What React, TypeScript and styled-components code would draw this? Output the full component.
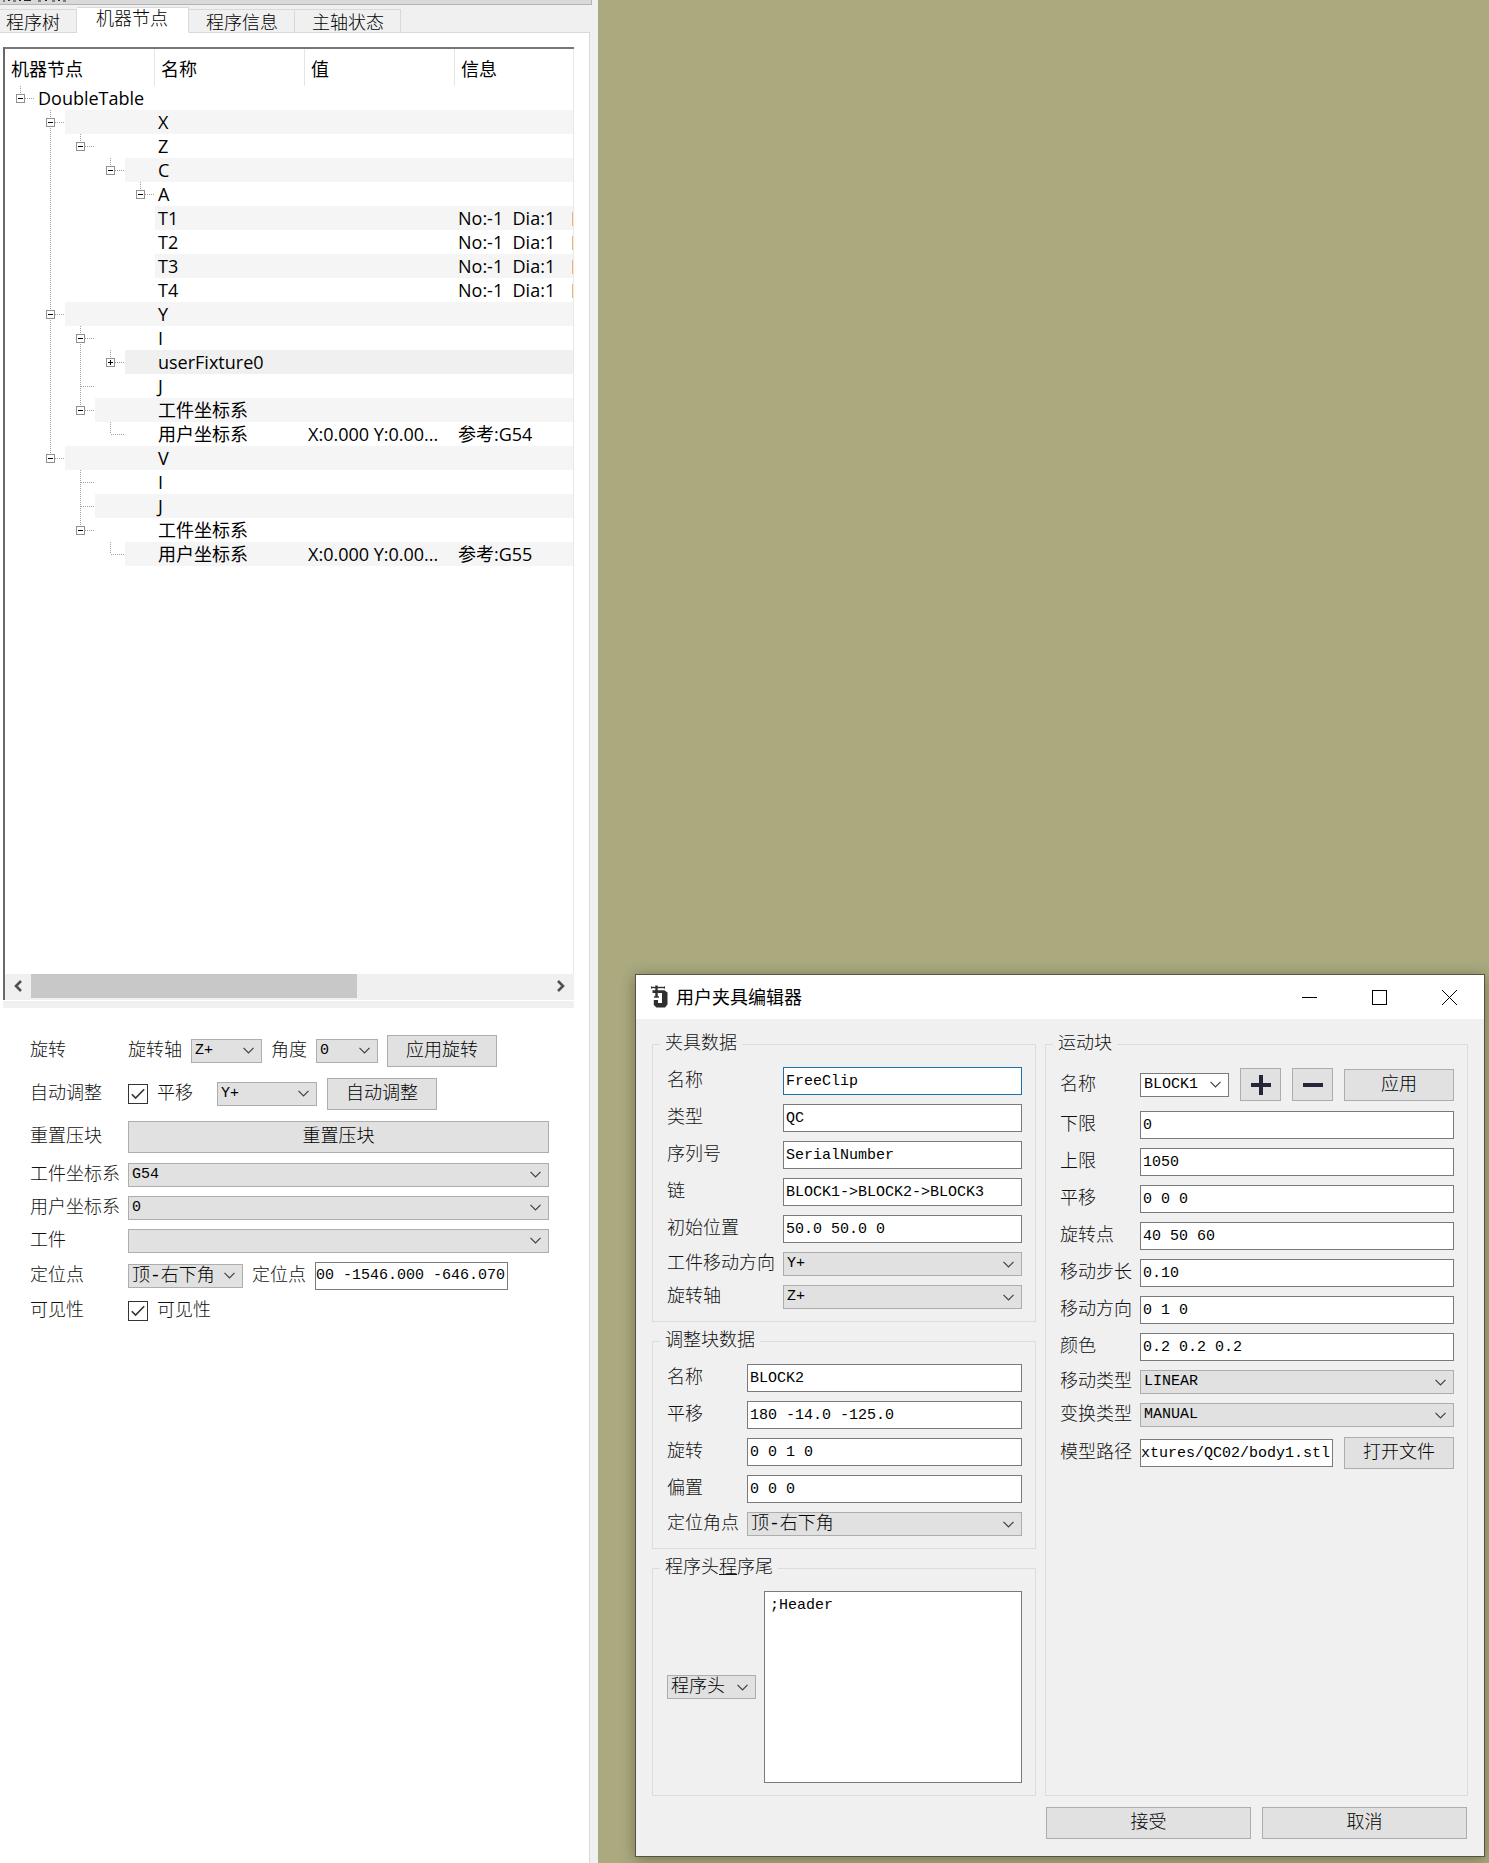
import React from 'react';
import styled, { createGlobalStyle, css } from 'styled-components';

const SANS = `"Open Sans", "Noto Sans CJK SC", sans-serif`;
const MONO = `"Liberation Mono", "Noto Sans CJK SC", monospace`;

const GlobalStyle = createGlobalStyle`
  *, *::before, *::after { box-sizing: border-box; }
  body { margin: 0; background: #aba97e; }
  button, input, select, textarea { margin: 0; border-radius: 0; color: #000; }
`;

/* ---------- shared controls ---------- */

const captionStyle = css`
  font: 300 18px/24px ${MONO};
  color: #111;
  white-space: nowrap;
`;

const Caption = styled.label`
  ${captionStyle}
`;

const CaptionText = styled.span`
  ${captionStyle}
`;

const PushButton = styled.button<{ $width?: string }>`
  flex-shrink: 0;
  height: 32px;
  width: ${(p) => p.$width ?? 'auto'};
  padding: 0;
  border: 1px solid #adadad;
  background: #e1e1e1;
  font: 300 18px/24px ${MONO};
  white-space: nowrap;
`;

const IconButton = styled.button`
  display: grid;
  place-items: center;
  flex-shrink: 0;
  width: 41px;
  height: 33px;
  padding: 0;
  border: 1px solid #adadad;
  background: #e1e1e1;
`;

const TextBox = styled.input<{ $active?: boolean; $flush?: boolean; $width?: string }>`
  width: ${(p) => p.$width ?? '100%'};
  min-width: 0;
  height: 28px;
  padding: 0 ${(p) => (p.$flush ? 0 : 2)}px;
  border: 1px solid ${(p) => (p.$active ? '#1f6fa8' : '#7a7a7a')};
  background: #fff;
  font: 15px/24px ${MONO};
  outline: none;
`;

const SelectFrame = styled.span<{ $width?: string }>`
  display: grid;
  align-items: center;
  width: ${(p) => p.$width ?? '100%'};
  height: 24px;
  & > * { grid-area: 1 / 1; }
  & > svg { justify-self: end; margin-right: 8px; pointer-events: none; }
`;

const NativeSelect = styled.select<{ $editable?: boolean; $cjk?: boolean }>`
  appearance: none;
  width: 100%;
  height: 24px;
  padding: 0 20px 0 3px;
  border: 1px solid ${(p) => (p.$editable ? '#7a7a7a' : '#adadad')};
  background: ${(p) => (p.$editable ? '#fff' : '#e1e1e1')};
  font: ${(p) => (p.$cjk ? '300 18px/22px' : '15px/22px')} ${MONO};
`;

type DropDownProps = {
  id?: string;
  value: string;
  width?: string;
  editable?: boolean;
  cjk?: boolean;
  label?: string;
};

function DropDown({ id, value, width, editable, cjk, label }: DropDownProps) {
  return (
    <SelectFrame $width={width}>
      <NativeSelect id={id} defaultValue={value} $editable={editable} $cjk={cjk} aria-label={label}>
        <option value={value}>{value}</option>
      </NativeSelect>
      <svg width="11" height="7" viewBox="0 0 11 7" fill="none" stroke="#404040" strokeWidth="1.2">
        <path d="M0.5 0.8 L5.5 5.8 L10.5 0.8" />
      </svg>
    </SelectFrame>
  );
}

const CheckLabel = styled.label`
  display: flex;
  align-items: center;
  gap: 9px;
  ${captionStyle}
`;

const CheckFrame = styled.span`
  display: grid;
  place-items: center;
  & > * { grid-area: 1 / 1; }
  & > svg { pointer-events: none; }
`;

const CheckInput = styled.input`
  appearance: none;
  width: 20px;
  height: 20px;
  border: 1px solid #333;
  background: #fff;
`;

function CheckBox({ text }: { text: string }) {
  return (
    <CheckLabel>
      <CheckFrame>
        <CheckInput type="checkbox" defaultChecked />
        <svg width="14" height="12" viewBox="0 0 14 12" fill="none" stroke="#333" strokeWidth="1.6">
          <path d="M0.8 6.2 L4.6 10 L13.2 1.2" />
        </svg>
      </CheckFrame>
      {text}
    </CheckLabel>
  );
}

const FormGrid = styled.div`
  display: grid;
  grid-template-columns: max-content minmax(0, 1fr);
  gap: 9px 8px;
  align-items: center;
`;

const ControlRow = styled.div<{ $gap?: number; $min?: number }>`
  display: flex;
  align-items: center;
  gap: ${(p) => p.$gap ?? 9}px;
  min-height: ${(p) => p.$min ?? 20}px;
`;

/* ---------- docked panel ---------- */

const Desktop = styled.div`
  display: grid;
  grid-template-columns: minmax(0, 598fr) minmax(0, 891fr);
  min-height: 100vh;
  background: #aba97e;
`;

const Dock = styled.aside`
  display: flex;
  flex-direction: column;
  padding-right: 8px;
  background: #f0f0f0;
`;

const DockTitle = styled.div`
  height: 5px;
  margin-right: -2px;
  border: solid #b4b4b4;
  border-width: 0 1px 1px 0;
  background: #d9d9d9;
  overflow: hidden;
  & > svg { display: block; }
`;

const TabBar = styled.div`
  z-index: 1;
  display: flex;
  align-items: flex-end;
  height: 28px;
`;

const Tab = styled.button<{ $active?: boolean; $first?: boolean }>`
  height: 24px;
  padding: 4px 16px 0 17px;
  border: 1px solid #d9d9d9;
  border-left-width: 0;
  background: #f0f0f0;
  font: 300 18px/20px ${MONO};
  white-space: nowrap;
  ${(p) => p.$first && css`padding-left: 6px;`}
  ${(p) =>
    p.$active &&
    css`
      height: 26px;
      padding: 0 20px 0 19px;
      border-bottom-color: #fff;
      background: #fff;
    `}
`;

const DockPage = styled.div`
  flex: 1;
  display: flex;
  flex-direction: column;
  margin-top: -1px;
  padding: 14px 15px 0 3px;
  border: solid #d9d9d9;
  border-width: 1px 1px 0 0;
  background: #fff;
`;

const TreeFrame = styled.section`
  flex: 952 1 0;
  display: flex;
  flex-direction: column;
  border: solid #696969;
  border-width: 2px 0 0 2px;
  border-top-color: #777;
  overflow: hidden;
`;

const TreeArea = styled.div`
  flex: 1;
  border-right: 1px solid #e8e8e8;
`;

const TreeTable = styled.table`
  width: 100%;
  table-layout: fixed;
  border-collapse: collapse;
  font: 18px/24px ${SANS};
  color: #000;
`;

const HeadCell = styled.th`
  height: 37px;
  padding: 2px 0 0 6px;
  font: 18px/24px ${SANS};
  text-align: left;
  &:not(:last-child) {
    width: 150px;
    box-shadow: inset -1px 0 #e5e5e5;
  }
`;

const TreeRow = styled.tr<{ $shade?: string }>`
  height: 24px;
  & > td { background: ${(p) => p.$shade ?? '#fff'}; }
  & > td:first-child { background: none; }
`;

const Cell = styled.td`
  height: 24px;
  padding: 0 0 0 3px;
  overflow: hidden;
  white-space: pre;
`;

/* Amber edge of a tool row whose details run on past the column */
const OverflowEdge = styled.i`
  float: right;
  width: 1px;
  height: 14px;
  margin-top: 6px;
  background: #f0b46e;
`;

const BranchCell = styled.td`
  height: 24px;
  padding: 0;
`;

const Branch = styled.div`
  display: flex;
  height: 24px;
`;

const BranchRest = styled.span<{ $shade?: string }>`
  flex: 1;
  padding-left: 3px;
  background: ${(p) => p.$shade ?? '#fff'};
`;

/* Guide codes, one for each indent step:
   ' ' empty, '|' line through, 't' tee, 'l' corner,
   'a' open box with line above, 'b' open box with line above and below, 'p' closed box */
function Guide({ kind }: { kind: string }) {
  const up = kind !== ' ';
  const down = kind === '|' || kind === 't' || kind === 'b';
  const side = kind !== ' ' && kind !== '|';
  const box = kind === 'a' || kind === 'b' || kind === 'p';
  return (
    <svg width="30" height="24" viewBox="0 0 30 24" shapeRendering="crispEdges">
      <g stroke="#a0a0a0" strokeDasharray="1 1">
        {up && <path d="M15.5 0 V12" />}
        {down && <path d="M15.5 12 V24" />}
        {side && <path d="M16 12.5 H30" />}
      </g>
      {box && <rect x="11.5" y="8.5" width="8" height="8" fill="#fff" stroke="#919191" />}
      {box && <path d="M13 12.5 H18" stroke="#000" />}
      {kind === 'p' && <path d="M15.5 10 V15" stroke="#000" />}
    </svg>
  );
}

const SHADE = '#f5f5f5';

type Node = {
  guides: string;
  root?: string;
  name?: string;
  value?: string;
  info?: string;
  more?: boolean;
  shade?: string;
};

const TOOL = { guides: ' |   ', info: 'No:-1  Dia:1', more: true };

const NODES: Node[] = [
  { guides: 'a', root: 'DoubleTable' },
  { guides: ' b', name: 'X', shade: SHADE },
  { guides: ' |a', name: 'Z' },
  { guides: ' | a', name: 'C', shade: SHADE },
  { guides: ' |  a', name: 'A' },
  { ...TOOL, name: 'T1', shade: SHADE },
  { ...TOOL, name: 'T2' },
  { ...TOOL, name: 'T3', shade: SHADE },
  { ...TOOL, name: 'T4' },
  { guides: ' b', name: 'Y', shade: SHADE },
  { guides: ' |b', name: 'I' },
  { guides: ' ||p', name: 'userFixture0', shade: '#f0f0f0' },
  { guides: ' |t', name: 'J' },
  { guides: ' |a', name: '工件坐标系', shade: SHADE },
  { guides: ' | l', name: '用户坐标系', value: 'X:0.000 Y:0.00...', info: '参考:G54' },
  { guides: ' a', name: 'V', shade: SHADE },
  { guides: '  t', name: 'I' },
  { guides: '  t', name: 'J', shade: SHADE },
  { guides: '  a', name: '工件坐标系' },
  { guides: '   l', name: '用户坐标系', value: 'X:0.000 Y:0.00...', info: '参考:G55', shade: SHADE },
];

const ScrollBar = styled.div`
  display: flex;
  height: 26px;
  padding-bottom: 2px;
  background: #f0f0f0;
`;

const ScrollButton = styled.button`
  display: grid;
  place-items: center;
  width: 26px;
  padding: 0;
  border: 0;
  background: #f0f0f0;
`;

const ScrollTrack = styled.div`
  flex: 1;
  display: flex;
`;

const ScrollThumb = styled.div`
  width: 63%;
  background: #c8c8c8;
`;

const Splitter = styled.div`
  height: 7px;
  margin-top: 1px;
  background: #f0f0f0;
`;

const DockForm = styled.form`
  flex: 804 1 0;
  padding: 26px 25px 26px 27px;
`;

function MachineTree() {
  return (
    <TreeFrame>
      <TreeArea>
        <TreeTable>
          <thead>
            <tr>
              <HeadCell>机器节点</HeadCell>
              <HeadCell>名称</HeadCell>
              <HeadCell>值</HeadCell>
              <HeadCell>信息</HeadCell>
            </tr>
          </thead>
          <tbody>
            {NODES.map((n, i) => (
              <TreeRow key={i} $shade={n.shade}>
                <BranchCell>
                  <Branch>
                    {n.guides.split('').map((g, k) => (
                      <Guide key={k} kind={g} />
                    ))}
                    {n.guides.length < 5 && <BranchRest $shade={n.shade}>{n.root}</BranchRest>}
                  </Branch>
                </BranchCell>
                <Cell>{n.name}</Cell>
                <Cell>{n.value}</Cell>
                <Cell>
                  {n.more && <OverflowEdge />}
                  {n.info}
                </Cell>
              </TreeRow>
            ))}
          </tbody>
        </TreeTable>
      </TreeArea>
      <ScrollBar>
        <ScrollButton type="button" aria-label="向左滚动">
          <svg width="9" height="12" viewBox="0 0 9 12" fill="none" stroke="#505050" strokeWidth="2.6">
            <path d="M7 1 L2 6 L7 11" />
          </svg>
        </ScrollButton>
        <ScrollTrack>
          <ScrollThumb />
        </ScrollTrack>
        <ScrollButton type="button" aria-label="向右滚动">
          <svg width="9" height="12" viewBox="0 0 9 12" fill="none" stroke="#505050" strokeWidth="2.6">
            <path d="M1 1 L6 6 L1 11" />
          </svg>
        </ScrollButton>
      </ScrollBar>
    </TreeFrame>
  );
}

function WorkpieceForm() {
  return (
    <DockForm>
      <FormGrid>
        <CaptionText>旋转</CaptionText>
        <ControlRow $min={34}>
          <Caption htmlFor="rot-axis">旋转轴</Caption>
          <DropDown id="rot-axis" value="Z+" width="71px" />
          <Caption htmlFor="rot-angle">角度</Caption>
          <DropDown id="rot-angle" value="0" width="62px" />
          <PushButton type="button" $width="110px">应用旋转</PushButton>
        </ControlRow>

        <CaptionText>自动调整</CaptionText>
        <ControlRow $min={34} $gap={10}>
          <ControlRow $gap={24}>
            <CheckBox text="平移" />
            <DropDown value="Y+" width="100px" label="平移" />
          </ControlRow>
          <PushButton type="button" $width="110px">自动调整</PushButton>
        </ControlRow>

        <CaptionText>重置压块</CaptionText>
        <ControlRow $min={34}>
          <PushButton type="button" $width="100%">重置压块</PushButton>
        </ControlRow>

        <Caption htmlFor="work-cs">工件坐标系</Caption>
        <DropDown id="work-cs" value="G54" />

        <Caption htmlFor="user-cs">用户坐标系</Caption>
        <DropDown id="user-cs" value="0" />

        <Caption htmlFor="workpiece">工件</Caption>
        <DropDown id="workpiece" value="" />

        <Caption htmlFor="anchor">定位点</Caption>
        <ControlRow>
          <DropDown id="anchor" value="顶-右下角" width="115px" cjk />
          <Caption htmlFor="anchor-pos">定位点</Caption>
          <TextBox id="anchor-pos" defaultValue="00 -1546.000 -646.070" $width="193px" $flush />
        </ControlRow>

        <CaptionText>可见性</CaptionText>
        <CheckBox text="可见性" />
      </FormGrid>
    </DockForm>
  );
}

/* ---------- fixture editor window ---------- */

const Workspace = styled.main`
  display: flex;
  align-items: flex-end;
  padding: 24px 4px 6px 37px;
`;

const Window = styled.section`
  flex: 1;
  min-width: 0;
  border: 1px solid #55553f;
  background: #f0f0f0;
  box-shadow: 0 2px 14px rgba(0, 0, 0, 0.32);
`;

const TitleBar = styled.header`
  display: flex;
  align-items: center;
  height: 44px;
  padding-left: 14px;
  background: #fff;
`;

const Title = styled.h1`
  flex: 1;
  margin: 0 0 0 7px;
  font: 18px/24px ${SANS};
  color: #000;
`;

const WindowButton = styled.button`
  display: grid;
  place-items: center;
  width: 70px;
  height: 42px;
  padding: 0;
  border: 0;
  background: #fff;
`;

const WindowBody = styled.form`
  display: grid;
  grid-template-columns: minmax(0, 384fr) minmax(0, 423fr);
  gap: 11px 9px;
  padding: 15px 16px 17px;
`;

const GroupStack = styled.div`
  display: flex;
  flex-direction: column;
  gap: 9px;
`;

const Group = styled.fieldset`
  min-width: 0;
  margin: 0;
  padding: 13px 13px 12px 14px;
  border: 1px solid #dcdcdc;
`;

const Legend = styled.legend`
  margin-left: -7px;
  padding: 0 5px;
  font: 300 18px/20px ${MONO};
  color: #111;
`;

const CodeRow = styled.div`
  display: flex;
  align-items: center;
  gap: 8px;
`;

const CodeBox = styled.textarea`
  display: block;
  flex: 1;
  min-width: 0;
  height: 192px;
  padding: 4px 5px;
  border: 1px solid #7a7a7a;
  background: #fff;
  font: 15px/20px ${MONO};
  resize: none;
  outline: none;
`;

const Footer = styled.footer`
  grid-column: 2;
  display: flex;
  gap: 11px;
  padding: 0 1px;
  & > button { flex: 1; }
`;

type FieldSpec = { label: string; value: string; select?: boolean; cjk?: boolean; active?: boolean };

const FIXTURE: FieldSpec[] = [
  { label: '名称', value: 'FreeClip', active: true },
  { label: '类型', value: 'QC' },
  { label: '序列号', value: 'SerialNumber' },
  { label: '链', value: 'BLOCK1->BLOCK2->BLOCK3' },
  { label: '初始位置', value: '50.0 50.0 0' },
  { label: '工件移动方向', value: 'Y+', select: true },
  { label: '旋转轴', value: 'Z+', select: true },
];

const ADJUST: FieldSpec[] = [
  { label: '名称', value: 'BLOCK2' },
  { label: '平移', value: '180 -14.0 -125.0' },
  { label: '旋转', value: '0 0 1 0' },
  { label: '偏置', value: '0 0 0' },
  { label: '定位角点', value: '顶-右下角', select: true, cjk: true },
];

const MOTION: FieldSpec[] = [
  { label: '下限', value: '0' },
  { label: '上限', value: '1050' },
  { label: '平移', value: '0 0 0' },
  { label: '旋转点', value: '40 50 60' },
  { label: '移动步长', value: '0.10' },
  { label: '移动方向', value: '0 1 0' },
  { label: '颜色', value: '0.2 0.2 0.2' },
  { label: '移动类型', value: 'LINEAR', select: true },
  { label: '变换类型', value: 'MANUAL', select: true },
];

function Fields({ prefix, items }: { prefix: string; items: FieldSpec[] }) {
  return (
    <>
      {items.map((f, i) => {
        const id = `${prefix}-${i}`;
        return (
          <React.Fragment key={id}>
            <Caption htmlFor={id}>{f.label}</Caption>
            {f.select ? (
              <DropDown id={id} value={f.value} cjk={f.cjk} />
            ) : (
              <TextBox id={id} defaultValue={f.value} $active={f.active} />
            )}
          </React.Fragment>
        );
      })}
    </>
  );
}

function ClampLogo() {
  return (
    <svg width="19" height="24" viewBox="0 0 19 24" fill="none" stroke="#2f2f2f">
      <path d="M1 2.5 H15" strokeWidth="1.4" />
      <path d="M1.5 1.5 V3.5 M14.5 1.5 V3.5" />
      <path d="M6.5 0.5 V12" strokeWidth="2.4" />
      <path d="M4 12 H9" strokeWidth="1.4" />
      <path d="M2.5 5.2 H14.5 L17.5 7.5 V19.5 L15 22.5 H6.5 L3.8 20 V15 H8 V18 H12 V8 H2.5 Z" fill="#2f2f2f" stroke="none" />
    </svg>
  );
}

function FixtureEditor() {
  return (
    <Window aria-label="用户夹具编辑器">
      <TitleBar>
        <ClampLogo />
        <Title>用户夹具编辑器</Title>
        <WindowButton type="button" aria-label="最小化">
          <svg width="15" height="15" viewBox="0 0 15 15" stroke="#000"><path d="M0 7.5 H15" /></svg>
        </WindowButton>
        <WindowButton type="button" aria-label="最大化">
          <svg width="15" height="15" viewBox="0 0 15 15" stroke="#000" fill="none"><rect x="0.5" y="0.5" width="14" height="14" /></svg>
        </WindowButton>
        <WindowButton type="button" aria-label="关闭">
          <svg width="15" height="15" viewBox="0 0 15 15" stroke="#000"><path d="M0 0 L15 15 M15 0 L0 15" /></svg>
        </WindowButton>
      </TitleBar>
      <WindowBody>
        <GroupStack>
          <Group>
            <Legend>夹具数据</Legend>
            <FormGrid>
              <Fields prefix="fixture" items={FIXTURE} />
            </FormGrid>
          </Group>
          <Group>
            <Legend>调整块数据</Legend>
            <FormGrid>
              <Fields prefix="adjust" items={ADJUST} />
            </FormGrid>
          </Group>
          <Group>
            <Legend>程序头<u>程</u>序尾</Legend>
            <CodeRow>
              <DropDown value="程序头" width="89px" cjk label="程序段" />
              <CodeBox defaultValue=";Header" aria-label="程序头" />
            </CodeRow>
          </Group>
        </GroupStack>
        <Group>
          <Legend>运动块</Legend>
          <FormGrid>
            <Caption htmlFor="motion-name">名称</Caption>
            <ControlRow $min={35} $gap={11}>
              <DropDown id="motion-name" value="BLOCK1" width="89px" editable />
              <IconButton type="button" aria-label="添加">
                <svg width="20" height="20" viewBox="0 0 20 20" stroke="#26263a" strokeWidth="4"><path d="M0 10 H20 M10 0 V20" /></svg>
              </IconButton>
              <IconButton type="button" aria-label="删除">
                <svg width="20" height="20" viewBox="0 0 20 20" stroke="#26263a" strokeWidth="4"><path d="M0 10 H20" /></svg>
              </IconButton>
              <PushButton type="button" $width="110px">应用</PushButton>
            </ControlRow>
            <Fields prefix="motion" items={MOTION} />
            <Caption htmlFor="model-path">模型路径</Caption>
            <ControlRow $min={34} $gap={11}>
              <TextBox id="model-path" defaultValue="xtures/QC02/body1.stl" $flush />
              <PushButton type="button" $width="110px">打开文件</PushButton>
            </ControlRow>
          </FormGrid>
        </Group>
        <Footer>
          <PushButton type="button">接受</PushButton>
          <PushButton type="button">取消</PushButton>
        </Footer>
      </WindowBody>
    </Window>
  );
}

export default function App() {
  return (
    <>
      <GlobalStyle />
      <Desktop>
        <Dock>
          <DockTitle>
            <svg width="68" height="2" viewBox="0 0 68 2" stroke="#222">
              <path d="M3 1 H5 M8 0.5 H10 M13 1 H16 M19 0.5 H21 M24 0.5 H31 M38 1 H41 M45 0.5 H47 M52 1 H55 M58 0.5 H60 M63 1 H66" />
            </svg>
          </DockTitle>
          <TabBar role="tablist">
            <Tab type="button" role="tab" $first>程序树</Tab>
            <Tab type="button" role="tab" aria-selected $active>机器节点</Tab>
            <Tab type="button" role="tab">程序信息</Tab>
            <Tab type="button" role="tab">主轴状态</Tab>
          </TabBar>
          <DockPage>
            <MachineTree />
            <Splitter />
            <WorkpieceForm />
          </DockPage>
        </Dock>
        <Workspace>
          <FixtureEditor />
        </Workspace>
      </Desktop>
    </>
  );
}
